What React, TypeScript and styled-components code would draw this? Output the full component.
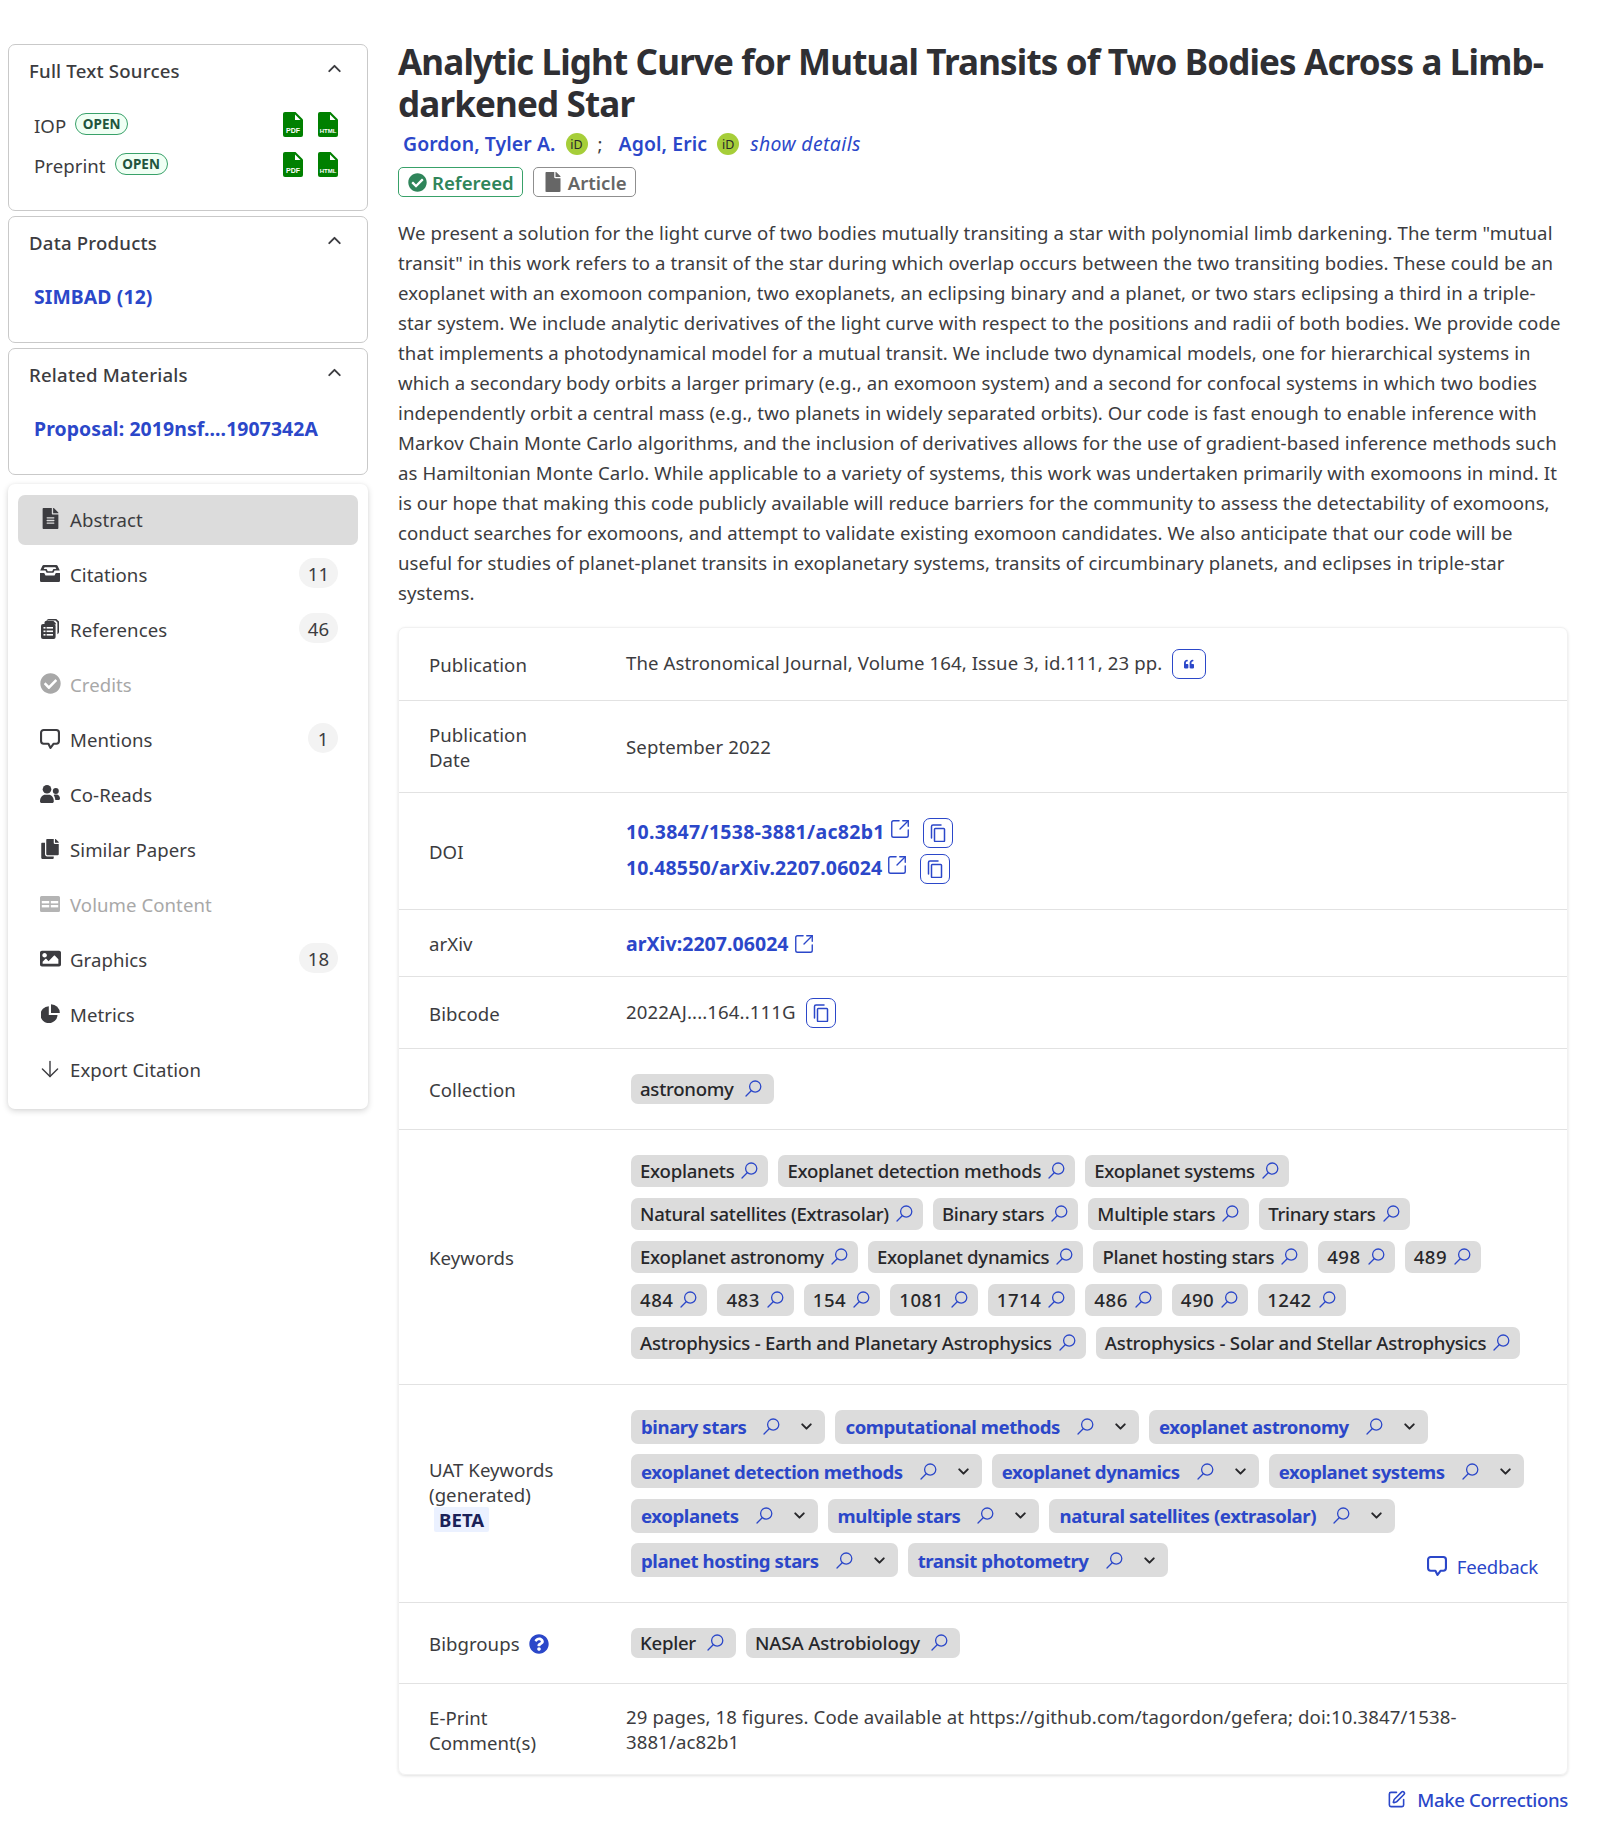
import { ArrowDown, ChevronDown, ChevronUp, SquareArrowOutUpRight, SquarePen } from 'lucide-react';
import { FaCheckCircle, FaCopy, FaFile, FaFileAlt, FaImage, FaQuestionCircle, FaQuoteLeft } from 'react-icons/fa';
import styled, { createGlobalStyle } from 'styled-components';

const BLUE = '#2b47c9';
const TEXT = '#3c3c40';

const GlobalStyle = createGlobalStyle`
  html, body {
    margin: 0;
    background: #fff;
    font-family: "Noto Sans", "Liberation Sans", sans-serif;
    font-size: 18.6px;
    letter-spacing: 0.05px;
    color: ${TEXT};
  }
`;

const Page = styled.div`
  display: grid;
  grid-template-columns: 360px 1170px;
  gap: 30px;
  padding: 41px 0 0 8px;
  min-height: 1826px;
  box-sizing: border-box;
  align-items: start;
`;

const Sidebar = styled.aside`
  display: flex;
  flex-direction: column;
  gap: 5px;
  padding-top: 3px;
`;

const SideCard = styled.section<{ $h: number }>`
  height: ${(p) => p.$h}px;
  box-sizing: border-box;
  border: 1px solid #c9c9c9;
  border-radius: 7px;
  padding: 10px 20px 0 20px;
`;

const SideHead = styled.div`
  display: flex;
  align-items: center;
  justify-content: space-between;
  height: 30px;
  font-weight: 500;
  letter-spacing: 0.2px;
  svg {
    margin-top: -3px;
    margin-right: 2px;
  }
`;

const SideBody = styled.div<{ $top: number }>`
  padding: ${(p) => p.$top}px 0 0 5px;
`;

const SourceRow = styled.div`
  display: flex;
  align-items: center;
  height: 41px;
  margin-top: -1px;
`;

const SourceName = styled.span`
  margin-right: 9px;
`;

const OpenBadge = styled.span`
  display: inline-flex;
  align-items: center;
  justify-content: center;
  height: 22px;
  width: 53px;
  box-sizing: border-box;
  border: 1px solid #38a169;
  border-radius: 11px;
  background: #f0fff4;
  color: #22543d;
  font-size: 13.5px;
  font-weight: 700;
  margin-top: -4px;
`;

const FileIcons = styled.div`
  display: flex;
  gap: 15px;
  margin-left: auto;
  margin-right: 9px;
  margin-top: -3px;
`;

const SideLink = styled.a`
  display: block;
  color: ${BLUE};
  font-size: 19.4px;
  font-weight: 700;
  height: 30px;
  line-height: 30px;
  letter-spacing: 0.1px;
`;

const Nav = styled.nav`
  margin-top: 4px;
  display: flex;
  flex-direction: column;
  gap: 5px;
  padding: 11px 10px 14px;
  border-radius: 7px;
  box-shadow: 0 2px 6px rgba(0, 0, 0, 0.16), 0 0 3px rgba(0, 0, 0, 0.04);
`;

const NavItem = styled.a<{ $active?: boolean; $disabled?: boolean }>`
  display: flex;
  align-items: center;
  height: 50px;
  box-sizing: border-box;
  padding: 0 20px 1px 22px;
  border-radius: 7px;
  letter-spacing: 0.06px;
  background: ${(p) => (p.$active ? '#dcdcdc' : 'transparent')};
  color: ${(p) => (p.$disabled ? '#a8a8a8' : TEXT)};
`;

const NavIcon = styled.span`
  display: flex;
  align-items: center;
  justify-content: center;
  width: 20px;
  margin-right: 10px;
  margin-top: -2px;
  svg {
    flex-shrink: 0;
  }
`;

const CountBadge = styled.span<{ $wide?: boolean }>`
  margin-left: auto;
  display: flex;
  align-items: center;
  justify-content: center;
  height: 30px;
  width: ${(p) => (p.$wide ? 39 : 30)}px;
  border-radius: 15px;
  background: #f3f3f3;
  margin-top: -3px;
`;

const Main = styled.main`
  min-width: 0;
`;

const Title = styled.h1`
  margin: 0;
  font-size: 35px;
  line-height: 42px;
  font-weight: 700;
  letter-spacing: -0.85px;
  color: #2f2f33;
`;

const Authors = styled.div`
  display: flex;
  align-items: center;
  height: 30px;
  margin-top: 3px;
  margin-bottom: 1px;
  padding-left: 5px;
`;

const Author = styled.a`
  color: ${BLUE};
  font-size: 19.4px;
  font-weight: 600;
  letter-spacing: 0.1px;
`;

const Orcid = styled.span`
  display: inline-flex;
  align-items: center;
  justify-content: center;
  width: 22px;
  height: 22px;
  border-radius: 50%;
  background: #a6ce39;
  color: #2a2a2a;
  font-size: 12.5px;
  margin: 2px 0 0 10px;
`;

const Sep = styled.span`
  margin: 0 16px 0 10px;
`;

const ShowDetails = styled.a`
  color: ${BLUE};
  font-size: 19.4px;
  font-style: italic;
  margin-left: 11px;
  letter-spacing: 0.4px;
`;

const Tags = styled.div`
  display: flex;
  gap: 10px;
  margin-top: 9px;
`;

const Tag = styled.span<{ $color: string; $border: string }>`
  display: inline-flex;
  align-items: center;
  gap: 5px;
  height: 30px;
  box-sizing: border-box;
  padding: 0 8px 0 9px;
  border: 1px solid ${(p) => p.$border};
  border-radius: 5px;
  color: ${(p) => p.$color};
  font-weight: 600;
  letter-spacing: 0;
`;

const Abstract = styled.p`
  margin: 21px 0 19px;
  line-height: 30px;
  letter-spacing: 0.09px;
  span {
    display: block;
    white-space: nowrap;
  }
`;

const Table = styled.div`
  border: 1px solid #f1f1f1;
  border-radius: 7px;
  box-shadow: 0 1px 3px rgba(0, 0, 0, 0.12);
`;

const Row = styled.div<{ $h: number; $last?: boolean }>`
  display: grid;
  grid-template-columns: 197px 1fr;
  align-items: center;
  height: ${(p) => p.$h}px;
  box-sizing: border-box;
  padding: 0 29px 0 30px;
  line-height: 25px;
  border-bottom: ${(p) => (p.$last ? 'none' : '1px solid #e2e2e2')};
`;

const Label = styled.div<{ $free?: boolean }>`
  width: ${(p) => (p.$free ? 'auto' : '125px')};
  margin-top: 1px;
`;

const Value = styled.div<{ $chips?: boolean }>`
  padding-left: ${(p) => (p.$chips ? 5 : 0)}px;
  letter-spacing: 0.1px;
`;

const Inline = styled.div`
  display: flex;
  align-items: center;
  gap: 10px;
  letter-spacing: 0.1px;
`;

const InlineText = styled.span`
  margin-top: -3px;
`;

const BoldLink = styled.a<{ $spacing: number }>`
  color: ${BLUE};
  font-size: 19.5px;
  font-weight: 700;
  letter-spacing: ${(p) => p.$spacing}px;
`;

const DoiText = styled(BoldLink)`
  margin-top: -3px;
`;

const DoiList = styled.div`
  display: flex;
  flex-direction: column;
  gap: 6px;
`;

const DoiLine = styled.div`
  display: flex;
  align-items: center;
  height: 30px;
`;

const ExtWrap = styled.span<{ $raised?: boolean }>`
  display: inline-flex;
  color: ${BLUE};
  margin-left: 4px;
  margin-top: ${(p) => (p.$raised ? -8 : 2)}px;
`;

const SquareBtn = styled.button`
  display: inline-flex;
  align-items: center;
  justify-content: center;
  width: 30px;
  height: 30px;
  padding: 0;
  border: 1px solid ${BLUE};
  border-radius: 7px;
  background: #fff;
  color: ${BLUE};
`;

const QuoteBtn = styled(SquareBtn)`
  width: 34px;
`;

const DoiCopy = styled(SquareBtn)`
  margin-left: 12px;
`;

const ChipLines = styled.div<{ $gap: number }>`
  display: flex;
  flex-direction: column;
  gap: ${(p) => p.$gap}px;
`;

const ChipLine = styled.div`
  display: flex;
  gap: 10px;
`;

const Chip = styled.span<{ $short?: boolean; $spacing?: number }>`
  display: inline-flex;
  align-items: center;
  height: ${(p) => (p.$short ? 30 : 32)}px;
  box-sizing: border-box;
  padding: 0 ${(p) => (p.$short ? 12 : 10)}px 2px 9px;
  gap: ${(p) => (p.$short ? 11 : 7)}px;
  border-radius: 7px;
  background: #dcdcdc;
  color: #27272a;
  font-weight: 500;
  letter-spacing: ${(p) => p.$spacing ?? -0.27}px;
  white-space: nowrap;
`;

const UatChip = styled.span`
  display: inline-flex;
  align-items: center;
  height: 34px;
  padding: 0 10px 0 10px;
  border-radius: 7px;
  background: #dcdcdc;
  color: ${BLUE};
  font-weight: 700;
  letter-spacing: -0.42px;
  white-space: nowrap;
  svg:nth-of-type(1) {
    margin-left: 17px;
  }
  svg:nth-of-type(2) {
    margin-left: 18px;
    color: #27272a;
  }
`;

const Feedback = styled.a`
  margin-left: auto;
  display: inline-flex;
  align-items: center;
  align-self: flex-end;
  gap: 10px;
  height: 22px;
  color: ${BLUE};
  letter-spacing: -0.2px;
`;

const Beta = styled.span`
  display: inline-block;
  margin-left: 5px;
  padding: 0 5px;
  background: #ebf1ff;
  color: #1a2158;
  font-weight: 700;
  border-radius: 2px;
`;

const HelpIcon = styled.span`
  display: inline-flex;
  vertical-align: -3px;
  margin-left: 9px;
  color: ${BLUE};
`;

const Corrections = styled.a`
  display: flex;
  align-items: center;
  justify-content: flex-end;
  gap: 11px;
  margin-top: 12px;
  color: ${BLUE};
  font-weight: 500;
  letter-spacing: -0.33px;
`;

function FileBadge({ label }: { label: string }) {
  return (
    <svg width="20" height="25" viewBox="0 0 20 25">
      <path d="M2 0h10.5L20 7.5V23a2 2 0 0 1-2 2H2a2 2 0 0 1-2-2V2a2 2 0 0 1 2-2z" fill="#008000" />
      <path d="M12 2.5 17.5 8H12z" fill="#fff" />
      <text x="10" y="21" textAnchor="middle" fontSize={label === 'PDF' ? 7 : 6} fontWeight="700" fill="#fff" letterSpacing="0" fontFamily="Liberation Sans, sans-serif">
        {label}
      </text>
    </svg>
  );
}

function SearchGlyph() {
  return (
    <svg width="17" height="17" viewBox="0 0 17 17" fill="none" stroke={BLUE} strokeWidth="1.3" strokeLinecap="round">
      <circle cx="10.2" cy="6.6" r="5.6" />
      <path d="M6.2 10.8 1 16" />
    </svg>
  );
}

function CopyGlyph() {
  return (
    <svg width="18" height="18" viewBox="0 0 18 18" fill="none" stroke={BLUE} strokeWidth="1.5" strokeLinejoin="round">
      <rect x="5.5" y="4.5" width="10" height="13" rx="0.8" />
      <path d="M2.5 14V2.5a1.5 1.5 0 0 1 1.5-1.5h8" strokeLinecap="round" />
    </svg>
  );
}

function BubbleGlyph({ color, size = 20 }: { color: string; size?: number }) {
  return (
    <svg width={size} height={size} viewBox="0.5 0.5 19 19" fill="none" stroke={color} strokeWidth="2" strokeLinejoin="round">
      <path d="M4 1.5h12a2.5 2.5 0 0 1 2.5 2.5v8a2.5 2.5 0 0 1-2.5 2.5h-2.5L10.5 18.5 8.5 14.5H4A2.5 2.5 0 0 1 1.5 12V4A2.5 2.5 0 0 1 4 1.5z" />
    </svg>
  );
}

function TrayGlyph() {
  return (
    <svg width="20" height="17" viewBox="0 0 20 17" fill={TEXT}>
      <path d="M3.8 0h12.4c.7 0 1.2.3 1.5.9L19.8 5.500H14.600L13.400 7.800H6.600L5.400 5.500H.2L2.300.9C2.600.3 3.100 0 3.800 0z" />
      <path d="M4.600 2.200 3.700 4h2.900l1.200 2.300h4.400L13.400 4h2.900l-.9-1.800z" fill="#fff" />
      <path d="M0 8h4.200l1.300 2.500h9L15.800 8H20v7.400c0 .9-.7 1.600-1.600 1.600H1.600C.7 17 0 16.300 0 15.400z" />
    </svg>
  );
}

function ClipGlyph() {
  return (
    <svg width="18" height="20" viewBox="0 0 18 20" fill={TEXT}>
      <path d="M5.500 2.200C5.500 1 6.500 0 7.700 0h7.600L18 2.600v10.200c0 1.200-.6 2-1.600 2.400V3.400L14.500 1.400H7.400c-.8 0-1.400.2-1.900.8z" />
      <path d="M3.500 3.600C3.500 2.700 4.200 2 5.100 2h7.400l2.300 2.200v1.200H3.500z" />
      <rect x="0" y="5" width="14.600" height="15" rx="2" />
      <g fill="#fff">
        <rect x="2.500" y="8" width="2" height="1.600" />
        <rect x="5.600" y="8" width="6.400" height="1.600" />
        <rect x="2.500" y="11.500" width="2" height="1.600" />
        <rect x="5.600" y="11.500" width="6.400" height="1.600" />
        <rect x="2.500" y="15" width="2" height="1.600" />
        <rect x="5.600" y="15" width="6.400" height="1.600" />
      </g>
    </svg>
  );
}

function GridGlyph() {
  return (
    <svg width="20" height="16" viewBox="0 0 20 16" fill="#b4b4b4">
      <path d="M1.500 0h17A1.500 1.500 0 0 1 20 1.500V14.500a1.500 1.500 0 0 1-1.500 1.500h-17A1.500 1.500 0 0 1 0 14.500V1.500A1.500 1.500 0 0 1 1.500 0z" />
      <g fill="#fff">
        <rect x="1.800" y="5" width="7.400" height="2.400" />
        <rect x="10.800" y="5" width="7.400" height="2.400" />
        <rect x="1.800" y="9" width="7.400" height="2.400" />
        <rect x="10.800" y="9" width="7.400" height="2.400" />
      </g>
    </svg>
  );
}

function PeopleGlyph() {
  return (
    <svg width="20" height="18" viewBox="0 0 20 18" fill={TEXT}>
      <circle cx="7" cy="4.300" r="4.300" />
      <path d="M0 16.200C0 12.400 2.600 9.800 5.200 9.800h3.600c2.600 0 5 2.600 5 6.400 0 1-.7 1.800-1.700 1.800H1.700C.7 18 0 17.200 0 16.200z" />
      <circle cx="15.800" cy="6" r="3" />
      <path d="M13.600 10c.6-.3 1.300-.4 2-.4h.9c2 0 3.500 1.800 3.500 4.200 0 .7-.5 1.200-1.200 1.200h-3.500c-.1-1.900-.8-3.600-1.700-5z" />
    </svg>
  );
}

function PieGlyph() {
  return (
    <svg width="19" height="19" viewBox="0 0 19 19" fill={TEXT}>
      <path d="M7.800 2.200A8.500 8.500 0 1 0 16.500 11H7.800z" />
      <path d="M10 .2A8.800 8.800 0 0 1 18.800 9H10z" />
    </svg>
  );
}

const navItems = [
  { label: 'Abstract', icon: <FaFileAlt size={21} />, active: true },
  { label: 'Citations', icon: <TrayGlyph />, count: '11' },
  { label: 'References', icon: <ClipGlyph />, count: '46' },
  { label: 'Credits', icon: <FaCheckCircle size={21} />, disabled: true },
  { label: 'Mentions', icon: <BubbleGlyph color={TEXT} />, count: '1' },
  { label: 'Co-Reads', icon: <PeopleGlyph /> },
  { label: 'Similar Papers', icon: <FaCopy size={20} /> },
  { label: 'Volume Content', icon: <GridGlyph />, disabled: true },
  { label: 'Graphics', icon: <FaImage size={21} />, count: '18' },
  { label: 'Metrics', icon: <PieGlyph /> },
  { label: 'Export Citation', icon: <ArrowDown size={26} strokeWidth={1.3} /> },
];

const keywordLines = [
  ['Exoplanets', 'Exoplanet detection methods', 'Exoplanet systems'],
  ['Natural satellites (Extrasolar)', 'Binary stars', 'Multiple stars', 'Trinary stars'],
  ['Exoplanet astronomy', 'Exoplanet dynamics', 'Planet hosting stars', '498', '489'],
  ['484', '483', '154', '1081', '1714', '486', '490', '1242'],
  ['Astrophysics - Earth and Planetary Astrophysics', 'Astrophysics - Solar and Stellar Astrophysics'],
];

const uatLines = [
  ['binary stars', 'computational methods', 'exoplanet astronomy'],
  ['exoplanet detection methods', 'exoplanet dynamics', 'exoplanet systems'],
  ['exoplanets', 'multiple stars', 'natural satellites (extrasolar)'],
  ['planet hosting stars', 'transit photometry'],
];

const abstractLines = [
  'We present a solution for the light curve of two bodies mutually transiting a star with polynomial limb darkening. The term "mutual',
  'transit" in this work refers to a transit of the star during which overlap occurs between the two transiting bodies. These could be an',
  'exoplanet with an exomoon companion, two exoplanets, an eclipsing binary and a planet, or two stars eclipsing a third in a triple-',
  'star system. We include analytic derivatives of the light curve with respect to the positions and radii of both bodies. We provide code',
  'that implements a photodynamical model for a mutual transit. We include two dynamical models, one for hierarchical systems in',
  'which a secondary body orbits a larger primary (e.g., an exomoon system) and a second for confocal systems in which two bodies',
  'independently orbit a central mass (e.g., two planets in widely separated orbits). Our code is fast enough to enable inference with',
  'Markov Chain Monte Carlo algorithms, and the inclusion of derivatives allows for the use of gradient-based inference methods such',
  'as Hamiltonian Monte Carlo. While applicable to a variety of systems, this work was undertaken primarily with exomoons in mind. It',
  'is our hope that making this code publicly available will reduce barriers for the community to assess the detectability of exomoons,',
  'conduct searches for exomoons, and attempt to validate existing exomoon candidates. We also anticipate that our code will be',
  'useful for studies of planet-planet transits in exoplanetary systems, transits of circumbinary planets, and eclipses in triple-star',
  'systems.',
];

const keywordSpacing = (k: string) => {
  if (/^\d+$/.test(k)) return 0.5;
  return k.length > 40 ? -0.2 : -0.27;
};

export default function App() {
  return (
    <>
      <GlobalStyle />
      <Page>
        <Sidebar>
          <SideCard $h={167}>
            <SideHead>
              Full Text Sources <ChevronUp size={21} strokeWidth={2.2} />
            </SideHead>
            <SideBody $top={21}>
              <SourceRow>
                <SourceName>IOP</SourceName>
                <OpenBadge>OPEN</OpenBadge>
                <FileIcons>
                  <FileBadge label="PDF" />
                  <FileBadge label="HTML" />
                </FileIcons>
              </SourceRow>
              <SourceRow>
                <SourceName>Preprint</SourceName>
                <OpenBadge>OPEN</OpenBadge>
                <FileIcons>
                  <FileBadge label="PDF" />
                  <FileBadge label="HTML" />
                </FileIcons>
              </SourceRow>
            </SideBody>
          </SideCard>
          <SideCard $h={127}>
            <SideHead>
              Data Products <ChevronUp size={21} strokeWidth={2.2} />
            </SideHead>
            <SideBody $top={25}>
              <SideLink>SIMBAD (12)</SideLink>
            </SideBody>
          </SideCard>
          <SideCard $h={127}>
            <SideHead>
              Related Materials <ChevronUp size={21} strokeWidth={2.2} />
            </SideHead>
            <SideBody $top={25}>
              <SideLink>Proposal: 2019nsf....1907342A</SideLink>
            </SideBody>
          </SideCard>
          <Nav>
            {navItems.map((item) => (
              <NavItem key={item.label} $active={item.active} $disabled={item.disabled}>
                <NavIcon>{item.icon}</NavIcon>
                {item.label}
                {item.count && <CountBadge $wide={item.count.length > 1}>{item.count}</CountBadge>}
              </NavItem>
            ))}
          </Nav>
        </Sidebar>
        <Main>
          <Title>Analytic Light Curve for Mutual Transits of Two Bodies Across a Limb-darkened Star</Title>
          <Authors>
            <Author>Gordon, Tyler A.</Author>
            <Orcid>iD</Orcid>
            <Sep>;</Sep>
            <Author>Agol, Eric</Author>
            <Orcid>iD</Orcid>
            <ShowDetails>show details</ShowDetails>
          </Authors>
          <Tags>
            <Tag $color="#2f855a" $border="#38a169">
              <FaCheckCircle size={19} />
              Refereed
            </Tag>
            <Tag $color="#666" $border="#8f8f8f">
              <FaFile size={20} />
              Article
            </Tag>
          </Tags>
          <Abstract>
            {abstractLines.map((line) => (
              <span key={line}>{line}</span>
            ))}
          </Abstract>
          <Table>
            <Row $h={73}>
              <Label>Publication</Label>
              <Inline>
                <InlineText>The Astronomical Journal, Volume 164, Issue 3, id.111, 23 pp.</InlineText>
                <QuoteBtn>
                  <FaQuoteLeft size={10} />
                </QuoteBtn>
              </Inline>
            </Row>
            <Row $h={92}>
              <Label>Publication Date</Label>
              <Value>September 2022</Value>
            </Row>
            <Row $h={117}>
              <Label>DOI</Label>
              <DoiList>
                <DoiLine>
                  <DoiText $spacing={0.3}>10.3847/1538-3881/ac82b1</DoiText>
                  <ExtWrap $raised>
                    <SquareArrowOutUpRight size={22} strokeWidth={1.5} />
                  </ExtWrap>
                  <DoiCopy>
                    <CopyGlyph />
                  </DoiCopy>
                </DoiLine>
                <DoiLine>
                  <DoiText $spacing={0.15}>10.48550/arXiv.2207.06024</DoiText>
                  <ExtWrap $raised>
                    <SquareArrowOutUpRight size={22} strokeWidth={1.5} />
                  </ExtWrap>
                  <DoiCopy>
                    <CopyGlyph />
                  </DoiCopy>
                </DoiLine>
              </DoiList>
            </Row>
            <Row $h={67}>
              <Label>arXiv</Label>
              <DoiLine>
                <BoldLink $spacing={0.05}>arXiv:2207.06024</BoldLink>
                <ExtWrap>
                  <SquareArrowOutUpRight size={22} strokeWidth={1.5} />
                </ExtWrap>
              </DoiLine>
            </Row>
            <Row $h={72}>
              <Label>Bibcode</Label>
              <Inline>
                <InlineText>2022AJ....164..111G</InlineText>
                <SquareBtn>
                  <CopyGlyph />
                </SquareBtn>
              </Inline>
            </Row>
            <Row $h={81}>
              <Label>Collection</Label>
              <Value $chips>
                <ChipLine>
                  <Chip $short>
                    astronomy <SearchGlyph />
                  </Chip>
                </ChipLine>
              </Value>
            </Row>
            <Row $h={255}>
              <Label>Keywords</Label>
              <Value $chips>
                <ChipLines $gap={11}>
                  {keywordLines.map((line) => (
                    <ChipLine key={line[0]}>
                      {line.map((k) => (
                        <Chip key={k} $spacing={keywordSpacing(k)}>
                          {k} <SearchGlyph />
                        </Chip>
                      ))}
                    </ChipLine>
                  ))}
                </ChipLines>
              </Value>
            </Row>
            <Row $h={218}>
              <Label>
                UAT Keywords (generated)
                <br />
                <Beta>BETA</Beta>
              </Label>
              <Value $chips>
                <ChipLines $gap={10.5}>
                  {uatLines.map((line, i) => (
                    <ChipLine key={line[0]}>
                      {line.map((k) => (
                        <UatChip key={k}>
                          {k}
                          <SearchGlyph />
                          <ChevronDown size={17} strokeWidth={2.8} />
                        </UatChip>
                      ))}
                      {i === uatLines.length - 1 && (
                        <Feedback>
                          <BubbleGlyph color={BLUE} />
                          Feedback
                        </Feedback>
                      )}
                    </ChipLine>
                  ))}
                </ChipLines>
              </Value>
            </Row>
            <Row $h={81}>
              <Label $free>
                Bibgroups
                <HelpIcon>
                  <FaQuestionCircle size={20} />
                </HelpIcon>
              </Label>
              <Value $chips>
                <ChipLine>
                  <Chip $short>
                    Kepler <SearchGlyph />
                  </Chip>
                  <Chip $short $spacing={-0.1}>
                    NASA Astrobiology <SearchGlyph />
                  </Chip>
                </ChipLine>
              </Value>
            </Row>
            <Row $h={90} $last>
              <Label>E-Print Comment(s)</Label>
              <Value>
                29 pages, 18 figures. Code available at https://github.com/tagordon/gefera; doi:10.3847/1538-
                <br />
                3881/ac82b1
              </Value>
            </Row>
          </Table>
          <Corrections>
            <SquarePen size={19} />
            Make Corrections
          </Corrections>
        </Main>
      </Page>
    </>
  );
}
